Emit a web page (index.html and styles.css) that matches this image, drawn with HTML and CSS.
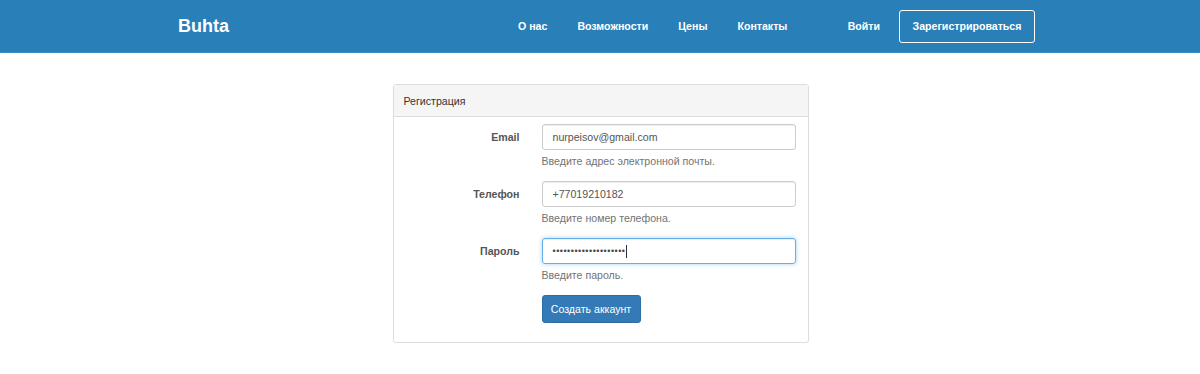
FILE: index.html
```html
<!DOCTYPE html>
<html lang="ru">
<head>
<meta charset="utf-8">
<title>Buhta — Регистрация</title>
<link rel="stylesheet" href="styles.css">
</head>
<body>
<header class="navbar">
  <div class="nav-inner">
    <a class="brand" href="#">Buhta</a>
    <nav class="nav-links">
      <a href="#">О нас</a>
      <a href="#">Возможности</a>
      <a href="#">Цены</a>
      <a href="#">Контакты</a>
    </nav>
    <div class="nav-right">
      <a class="login" href="#">Войти</a>
      <a class="signup" href="#">Зарегистрироваться</a>
    </div>
  </div>
</header>
<main class="page">
  <section class="panel">
    <div class="panel-heading">Регистрация</div>
    <form class="panel-body">
      <div class="group">
        <label class="label">Email</label>
        <div class="field">
          <div class="input">nurpeisov@gmail.com</div>
          <div class="help">Введите адрес электронной почты.</div>
        </div>
      </div>
      <div class="group">
        <label class="label">Телефон</label>
        <div class="field">
          <div class="input">+77019210182</div>
          <div class="help">Введите номер телефона.</div>
        </div>
      </div>
      <div class="group">
        <label class="label">Пароль</label>
        <div class="field">
          <div class="input focus"><span class="dots">••••••••••••••••••••</span><span class="caret"></span></div>
          <div class="help">Введите пароль.</div>
        </div>
      </div>
      <div class="group">
        <span class="label"></span>
        <div class="field">
          <button type="button" class="btn">Создать аккаунт</button>
        </div>
      </div>
    </form>
  </section>
</main>
</body>
</html>
```
FILE: styles.css
```css
* { box-sizing: border-box; }
html, body { margin: 0; padding: 0; }
body {
  font-family: "Liberation Sans", Arial, sans-serif;
  font-size: 10.6px;
  color: #333;
  background: #fff;
}
a { text-decoration: none; }

.navbar {
  background: #2980b9;
  height: 53px;
  border-bottom: 1px solid #3a8ac2;
}
.nav-inner {
  width: 870px;
  margin: 0 auto;
  height: 52px;
  display: flex;
  align-items: center;
}
.brand {
  color: #fff;
  font-weight: bold;
  font-size: 18px;
  margin-left: 13px;
}
.nav-links {
  display: flex;
  margin-left: 289px;
}
.nav-links a, .login {
  color: #fff;
  font-weight: bold;
  font-size: 10.6px;
}
.nav-links a { margin-right: 30px; }
.nav-right {
  margin-left: auto;
  display: flex;
  align-items: center;
}
.login { margin-right: 19px; }
.signup {
  color: #fff;
  font-weight: bold;
  font-size: 10.6px;
  border: 1px solid #fff;
  border-radius: 3px;
  height: 33px;
  width: 136px;
  display: flex;
  align-items: center;
  justify-content: center;
}

.page {
  padding-top: 31px;
  display: flex;
  justify-content: center;
}
.panel {
  width: 416px;
  margin-left: 1px;
  border: 1px solid #ddd;
  border-radius: 3px;
  box-shadow: 0 1px 1px rgba(0,0,0,0.05);
}
.panel-heading {
  background: #f5f5f5;
  border-bottom: 1px solid #ddd;
  height: 32px;
  padding: 0 10px;
  display: flex;
  align-items: center;
  color: #333;
}
.panel-body {
  padding: 7px 0 19px;
  display: flex;
  flex-direction: column;
}
.group {
  display: grid;
  grid-template-columns: 126px 254px;
  column-gap: 22px;
  margin-bottom: 13px;
}
.group:last-child { margin-bottom: 0; margin-top: 0; }
.label {
  text-align: right;
  font-weight: bold;
  color: #555;
  height: 26px;
  line-height: 26px;
}
.field { display: flex; flex-direction: column; }
.input {
  height: 26px;
  border: 1px solid #ccc;
  border-radius: 3px;
  padding: 0 10px;
  display: flex;
  align-items: center;
  color: #555;
  box-shadow: inset 0 1px 1px rgba(0,0,0,0.075);
}
.input.focus {
  border-color: #66afe9;
  box-shadow: inset 0 1px 1px rgba(0,0,0,0.075), 0 0 4px rgba(102,175,233,0.6);
}
.dots {
  font-size: 9px;
  letter-spacing: 0.5px;
  color: #444;
}
.caret {
  display: inline-block;
  width: 1px;
  height: 13px;
  background: #333;
}
.help {
  color: #737373;
  margin-top: 4px;
  line-height: 14px;
}
.btn {
  width: 99px;
  height: 28px;
  background: #337ab7;
  border: 1px solid #2e6da4;
  border-radius: 3px;
  color: #fff;
  font-family: "Liberation Sans", Arial, sans-serif;
  font-size: 10.6px;
  padding: 0;
}
```
